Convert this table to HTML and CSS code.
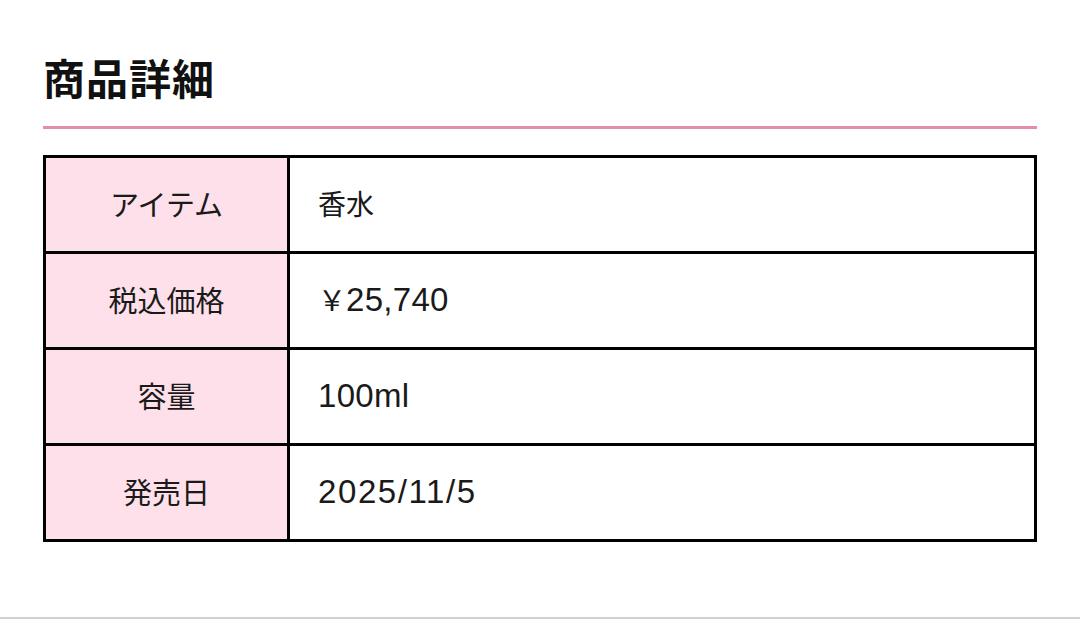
FILE: index.html
```html
<!DOCTYPE html>
<html lang="ja">
<head>
<meta charset="utf-8">
<link rel="stylesheet" href="styles.css">
</head>
<body>
<main class="page">
  <h2 class="title">商品詳細</h2>
  <table class="spec">
    <tr><th>アイテム</th><td>香水</td></tr>
    <tr><th>税込価格</th><td>￥<span class="num">25,740</span></td></tr>
    <tr><th>容量</th><td><span class="num">100ml</span></td></tr>
    <tr><th>発売日</th><td><span class="num date">2025/11/5</span></td></tr>
  </table>
</main>
</body>
</html>
```
FILE: styles.css
```css
html, body { margin: 0; padding: 0; }
body {
  background: #fff;
  color: #111;
  font-family: "Noto Sans CJK JP", "Noto Sans", sans-serif;
  height: 619px;
  box-sizing: border-box;
  border-bottom: 2px solid #d0d0d0;
}
.page {
  padding: 46px 43px 0 43px;
}
.title {
  margin: 0;
  font-size: 42px;
  font-weight: 700;
  line-height: 62px;
  padding-bottom: 18px;
  border-bottom: 3px solid #e48db0;
  letter-spacing: 1px;
}
.spec {
  margin-top: 26px;
  width: 100%;
  border-collapse: collapse;
  border: 3px solid #000;
}
.spec th, .spec td {
  border: 3px solid #000;
  height: 90px;
  padding: 0 0 3px 0;
  font-size: 28px;
  font-weight: 400;
  color: #1a1a1a;
  line-height: 1;
}
.spec th {
  width: 241px;
  background: #fde0ea;
  text-align: center;
  font-size: 29px;
}
.spec td {
  text-align: left;
  padding-left: 28px;
}
.num {
  font-family: "Liberation Sans", "Noto Sans CJK JP", sans-serif;
  font-size: 33px;
  letter-spacing: 0.3px;
}
.date {
  letter-spacing: 1.6px;
}
```
